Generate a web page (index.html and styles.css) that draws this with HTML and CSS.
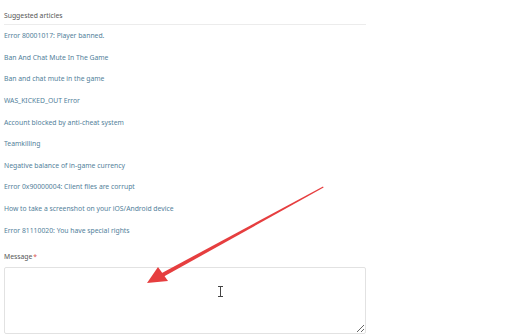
FILE: index.html
```html
<!DOCTYPE html>
<html lang="en">

<head>
  <meta charset="UTF-8">
  <meta name="viewport" content="width=device-width, initial-scale=1.0">
  <title>Support request</title>
  <link rel="stylesheet" href="styles.css">
</head>

<body>
  <div class="form">
    <div class="suggested">
      <div class="suggested-title">Suggested articles</div>
      <ul class="articles">
        <li><a href="#">Error 80001017: Player banned.</a></li>
        <li><a href="#">Ban And Chat Mute In The Game</a></li>
        <li><a href="#">Ban and chat mute in the game</a></li>
        <li><a href="#">WAS_KICKED_OUT Error</a></li>
        <li><a href="#">Account blocked by anti-cheat system</a></li>
        <li><a href="#">Teamkilling</a></li>
        <li><a href="#">Negative balance of in-game currency</a></li>
        <li><a href="#">Error 0x90000004: Client files are corrupt</a></li>
        <li><a href="#">How to take a screenshot on your iOS/Android device</a></li>
        <li><a href="#">Error 81110020: You have special rights</a></li>
      </ul>
    </div>
    <div class="field">
      <label class="field-label" for="message">Message<span class="req">*</span></label>
      <textarea id="message" class="message"></textarea>
    </div>
  </div>

  <!-- Markierung aus dem Screenshot -->
  <svg class="arrow" width="512" height="335" viewBox="0 0 512 335">
    <polygon points="323,186.5 323.6,187.6 163,277 161,273.5" fill="#e63e3f" />
    <polygon points="147,283 158,267 168,281" fill="#e63e3f" />
  </svg>
  <svg class="ibeam" width="7" height="11" viewBox="0 0 7 11">
    <path d="M1 0.5h5M3.5 0.5v10M1 10.5h5" stroke="#444" stroke-width="1" fill="none" />
  </svg>
</body>

</html>
```

FILE: styles.css
```css
body {
  font-family: "Noto Sans", "Open Sans", sans-serif;
  margin: 0;
  background: #fff;
  color: #555;
}

.form {
  width: 362px;
  padding: 9px 0 0 4px;
}

.suggested-title {
  font-size: 6.8px;
  line-height: 14px;
  color: #555;
  padding-bottom: 1px;
  border-bottom: 1px solid #ececec;
}

.articles {
  list-style: none;
  margin: 0;
  padding: 0;
}

.articles li {
  height: 21.65px;
  line-height: 21.65px;
  font-size: 6.8px;
}

.articles a {
  color: #52809a;
  text-decoration: none;
}

.field {
  margin-top: 9px;
}

.field-label {
  display: block;
  font-size: 6.8px;
  line-height: 14px;
  color: #555;
  margin-bottom: 3px;
}

.req {
  color: #d9534f;
  margin-left: 1px;
}

.message {
  display: block;
  box-sizing: border-box;
  width: 362px;
  height: 67px;
  margin: 0;
  border: 1px solid #e2e2e2;
  border-radius: 2px;
  resize: vertical;
}

.arrow {
  position: absolute;
  left: 0;
  top: 0;
  pointer-events: none;
}

.ibeam {
  position: absolute;
  left: 217px;
  top: 286px;
}
```
